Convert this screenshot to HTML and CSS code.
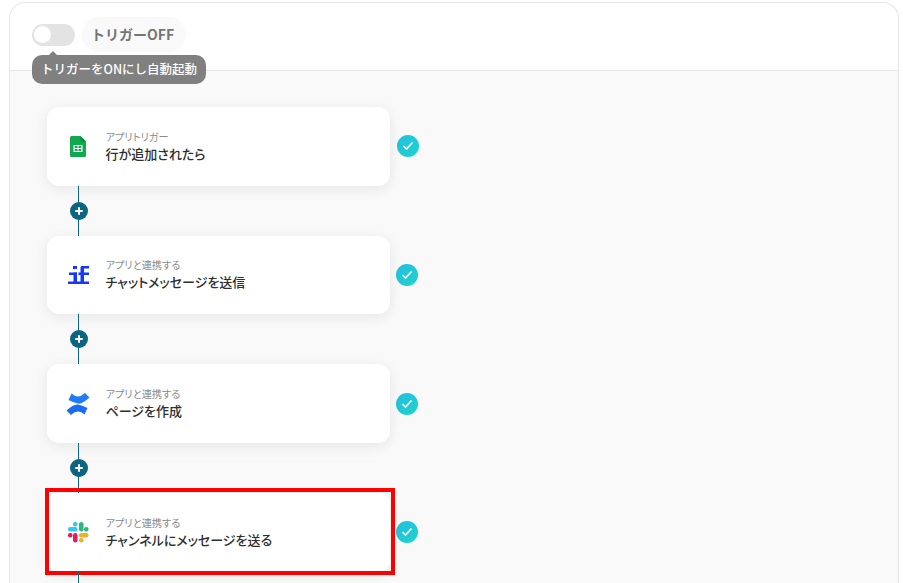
FILE: index.html
```html
<!DOCTYPE html>
<html lang="ja">
<head>
<meta charset="utf-8">
<title>フロー</title>
<link rel="stylesheet" href="styles.css">
</head>
<body>
<div class="panel">
  <div class="top">
    <div class="toggle"><span class="knob"></span></div>
    <div class="pill">トリガーOFF</div>
    <div class="tip">トリガーをONにし自動起動</div>
  </div>
  <div class="flow">

    <div class="row">
      <div class="card">
        <div class="icon">
          <svg width="16" height="21" viewBox="0 0 16 21">
            <path d="M1.500 0H10.500L16 5.500V19.500a1.500 1.500 0 0 1-1.500 1.500h-13A1.500 1.500 0 0 1 0 19.500V1.500A1.500 1.500 0 0 1 1.500 0z" fill="#12a84f"/>
            <path d="M10.500 0L16 5.500h-4a1.500 1.500 0 0 1-1.500-1.500z" fill="#0c8a41"/>
            <path d="M3.500 9h9v7h-9zM4.700 10.100v1.900h2.800v-1.900zM8.500 10.100v1.900h2.800v-1.900zM4.700 13v1.900h2.800V13zM8.500 13v1.900h2.800V13z" fill="#fff" fill-rule="evenodd"/>
          </svg>
        </div>
        <div class="texts">
          <div class="label">アプリトリガー</div>
          <div class="title">行が追加されたら</div>
        </div>
      </div>
      <div class="check"><svg width="12" height="10" viewBox="0 0 12 10"><path d="M1.500 5l3 3 6-6.500" fill="none" stroke="#fff" stroke-width="1.600"/></svg></div>
    </div>
    <div class="link"><span class="plus"></span></div>

    <div class="row">
      <div class="card">
        <div class="icon">
          <svg width="21" height="18" viewBox="0 0 21 18" fill="#1438fa">
            <rect x="5" y="0" width="4" height="3"/>
            <rect x="1" y="6.500" width="8" height="2.500"/>
            <rect x="5.500" y="6.500" width="3.500" height="10"/>
            <rect x="0" y="15.500" width="21" height="2.500"/>
            <rect x="12.500" y="1" width="3.500" height="15"/>
            <rect x="13" y="0" width="8" height="2.500"/>
            <rect x="10.500" y="6.500" width="10.500" height="2.500"/>
          </svg>
        </div>
        <div class="texts">
          <div class="label">アプリと連携する</div>
          <div class="title">チャットメッセージを送信</div>
        </div>
      </div>
      <div class="check shift"><svg width="12" height="10" viewBox="0 0 12 10"><path d="M1.500 5l3 3 6-6.500" fill="none" stroke="#fff" stroke-width="1.600"/></svg></div>
    </div>
    <div class="link"><span class="plus"></span></div>

    <div class="row">
      <div class="card">
        <div class="icon">
          <svg width="24" height="24" viewBox="0 0 24 24">
            <path d="M5.500 1.500Q12 7.500 19 1l4.500 4.500Q16 12.500 12 11.500 7 10.500 2.500 8z" fill="#1f7bf6"/>
            <path d="M18.500 22.500Q12 16.500 5 23L.5 18.500Q8 11.500 12 12.500 17 13.500 21.500 16z" fill="#1b6cf0"/>
          </svg>
        </div>
        <div class="texts">
          <div class="label">アプリと連携する</div>
          <div class="title">ページを作成</div>
        </div>
      </div>
      <div class="check shift"><svg width="12" height="10" viewBox="0 0 12 10"><path d="M1.500 5l3 3 6-6.500" fill="none" stroke="#fff" stroke-width="1.600"/></svg></div>
    </div>
    <div class="link"><span class="plus"></span></div>

    <div class="row">
      <div class="card picked">
        <div class="icon">
          <svg width="21" height="21" viewBox="0 0 21 21">
            <rect x="0" y="5" width="9.500" height="4.500" rx="2.250" fill="#36c5f0"/>
            <rect x="5" y="0" width="4.500" height="4.500" rx="2" fill="#36c5f0"/>
            <rect x="11" y="0" width="4.500" height="9.500" rx="2.250" fill="#2eb67d"/>
            <rect x="16" y="5" width="4.500" height="4.500" rx="2" fill="#2eb67d"/>
            <rect x="5" y="11" width="4.500" height="9.500" rx="2.250" fill="#e01e5a"/>
            <rect x="0" y="11" width="4.500" height="4.500" rx="2" fill="#e01e5a"/>
            <rect x="11" y="11" width="9.500" height="4.500" rx="2.250" fill="#ecb22e"/>
            <rect x="11" y="16" width="4.500" height="4.500" rx="2" fill="#ecb22e"/>
          </svg>
        </div>
        <div class="texts">
          <div class="label">アプリと連携する</div>
          <div class="title">チャンネルにメッセージを送る</div>
        </div>
      </div>
      <div class="check shift"><svg width="12" height="10" viewBox="0 0 12 10"><path d="M1.500 5l3 3 6-6.500" fill="none" stroke="#fff" stroke-width="1.600"/></svg></div>
    </div>
    <div class="link"></div>

  </div>
</div>
</body>
</html>
```

FILE: styles.css
```css
html, body {
  margin: 0;
  height: 100%;
  overflow: hidden;
  background: #fff;
}
body {
  padding: 2px 4px 0 9px;
  box-sizing: border-box;
  font-family: "Noto Sans CJK JP", "Noto Sans", sans-serif;
}
.panel {
  border: 1px solid #e6e6e6;
  border-bottom: none;
  border-radius: 16px 16px 0 0;
  height: 700px;
  background: #f9f9f9;
}
.top {
  position: relative;
  height: 68px;
  display: flex;
  align-items: center;
  gap: 7px;
  padding: 0 0 4px 22px;
  box-sizing: border-box;
  background: #fff;
  border-bottom: 1px solid #e6e6e6;
  border-radius: 16px 16px 0 0;
}
.toggle {
  width: 43px;
  height: 22px;
  border-radius: 11px;
  background: #e3e3e3;
  display: flex;
  align-items: center;
  padding-left: 2px;
  box-sizing: border-box;
}
.knob {
  width: 17px;
  height: 17px;
  border-radius: 50%;
  background: #fff;
}
.pill {
  height: 35px;
  line-height: 35px;
  padding: 0 12px 0 9px;
  border-radius: 18px;
  background: #f9f9f9;
  color: #757575;
  font-size: 14px;
  font-weight: 700;
}
.tip {
  position: absolute;
  left: 22px;
  top: 52px;
  height: 29px;
  line-height: 28px;
  padding: 0 9px;
  border-radius: 10px;
  background: #808080;
  color: #fff;
  font-size: 12.500px;
  font-weight: 500;
  white-space: nowrap;
}
.tip::before {
  content: "";
  position: absolute;
  left: 16px;
  top: -4px;
  border-left: 5px solid transparent;
  border-right: 5px solid transparent;
  border-bottom: 5px solid #808080;
}
.flow {
  padding: 36px 0 0 37px;
}
.row {
  display: flex;
  align-items: center;
  gap: 7px;
}
.card {
  position: relative;
  width: 342.500px;
  height: 78.670px;
  display: flex;
  align-items: center;
  background: #fff;
  border-radius: 12px;
  box-shadow: 0 3px 14px rgba(0, 0, 0, 0.08);
}
.picked::after {
  content: "";
  position: absolute;
  left: -2px;
  top: -5px;
  right: -5px;
  bottom: -3px;
  border: 4px solid #f00;
}
.icon {
  width: 58.500px;
  padding-left: 4px;
  box-sizing: border-box;
  flex: none;
  display: flex;
  justify-content: center;
}
.texts {
  display: flex;
  flex-direction: column;
  padding-bottom: 1px;
  font-feature-settings: "palt";
}
.label {
  font-size: 10.200px;
  line-height: 15px;
  color: #8a8a8a;
}
.title {
  font-size: 13px;
  line-height: 19px;
  font-weight: 500;
  color: #2e2e2e;
}
.check {
  width: 22px;
  height: 22px;
  border-radius: 50%;
  background: linear-gradient(135deg, #22bfe0, #1fd3cc);
  display: flex;
  align-items: center;
  justify-content: center;
}
.shift {
  margin-left: -1px;
}
.link {
  position: relative;
  height: 50px;
  width: 63px;
  display: flex;
  align-items: center;
  justify-content: center;
}
.link::before {
  content: "";
  position: absolute;
  left: 31px;
  top: 0;
  bottom: 0;
  width: 1.200px;
  background: #0b6a85;
}
.plus {
  position: relative;
  width: 18px;
  height: 18px;
  border-radius: 50%;
  background: #0b6480;
}
.plus::before, .plus::after {
  content: "";
  position: absolute;
  background: #fff;
  border-radius: 1px;
}
.plus::before {
  left: 5px;
  top: 8px;
  width: 8px;
  height: 2px;
}
.plus::after {
  left: 8px;
  top: 5px;
  width: 2px;
  height: 8px;
}
```
